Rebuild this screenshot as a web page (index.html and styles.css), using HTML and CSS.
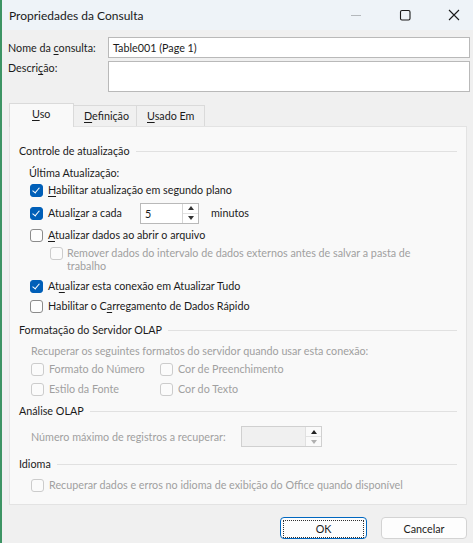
FILE: index.html
```html
<html>
  <head>
    <meta charset="utf-8" />
    <link rel="stylesheet" href="styles.css">
    <title>Propriedades da Consulta</title>
  </head>
  <body>
    <div class="window">
      <div class="titlebar">
        <span class="title">Propriedades da Consulta</span>
        <div class="controls">
          <svg class="ctl" width="12" height="12" viewBox="0 0 12 12"><path d="M1 6.5h10" stroke="#b4b8bc" stroke-width="1"/></svg>
          <svg class="ctl" width="12" height="12" viewBox="0 0 12 12"><rect x="1.5" y="1.5" width="9.5" height="9.5" rx="1.5" fill="none" stroke="#1a1a1a" stroke-width="1.1"/></svg>
          <svg class="ctl" width="12" height="12" viewBox="0 0 12 12"><path d="M1 1L11 11M11 1L1 11" stroke="#1a1a1a" stroke-width="1.1"/></svg>
        </div>
      </div>

      <div class="content">
        <div class="field">
          <label class="field-label">Nome da <u>c</u>onsulta:</label>
          <div class="input">Table001 (Page 1)</div>
        </div>
        <div class="field">
          <label class="field-label desc-label">Descri<u>ç</u>ão:</label>
          <div class="input textarea"></div>
        </div>

        <div class="tabs">
          <div class="tab active"><u>U</u>so</div>
          <div class="tab"><u>D</u>efinição</div>
          <div class="tab"><u>U</u>sado Em</div>
        </div>

        <div class="panel">
          <div class="group-title">Controle de atualização</div>
          <div class="indent sub-title">Última Atualização:</div>

          <div class="check-row r1">
            <span class="box checked"></span>
            <span><u>H</u>abilitar atualização em segundo plano</span>
          </div>
          <div class="check-row r2">
            <span class="box checked"></span>
            <span class="every">Atuali<u>z</u>ar a cada</span>
            <div class="spin">
              <span class="spin-value">5</span>
              <div class="spin-btns">
                <span class="arrow up"></span>
                <span class="arrow down"></span>
              </div>
            </div>
            <span class="units">minutos</span>
          </div>
          <div class="check-row r3">
            <span class="box"></span>
            <span><u>A</u>tualizar dados ao abrir o arquivo</span>
          </div>
          <div class="check-row nested disabled">
            <span class="box"></span>
            <span class="wrap">Remover dados do intervalo de dados externos antes de salvar a pasta de<br>trabalho</span>
          </div>
          <div class="check-row r5">
            <span class="box checked"></span>
            <span>At<u>u</u>alizar esta conexão em Atualizar Tudo</span>
          </div>
          <div class="check-row r6">
            <span class="box"></span>
            <span>Habilitar o C<u>a</u>rregamento de Dados Rápido</span>
          </div>

          <div class="group-title g2">Formatação do Servidor OLAP</div>
          <div class="dim intro">Recuperar os seguintes formatos do servidor quando usar esta conexão:</div>
          <div class="olap-grid disabled">
            <div class="check-row"><span class="box"></span><span>Formato do Número</span></div>
            <div class="check-row"><span class="box"></span><span>Cor de Preenchimento</span></div>
            <div class="check-row"><span class="box"></span><span>Estilo da Fonte</span></div>
            <div class="check-row"><span class="box"></span><span>Cor do Texto</span></div>
          </div>

          <div class="group-title g3">Análise OLAP</div>
          <div class="max-row">
            <span class="dim">Número máximo de registros a recuperar:</span>
            <div class="spin wide off">
              <span class="spin-value"></span>
              <div class="spin-btns">
                <span class="arrow up"></span>
                <span class="arrow down"></span>
              </div>
            </div>
          </div>

          <div class="group-title g4">Idioma</div>
          <div class="check-row lang disabled">
            <span class="box"></span>
            <span>Recuperar dados e erros no idioma de exibição do Office quando disponível</span>
          </div>
        </div>

        <div class="buttons">
          <button class="btn default"><span>OK</span></button>
          <button class="btn">Cancelar</button>
        </div>
      </div>
    </div>
  </body>
</html>
```

FILE: styles.css
```css
body {
  margin: 0;
  width: 473px;
  height: 543px;
  overflow: hidden;
  font-family: Lato, "Noto Sans", sans-serif;
  font-size: 10.75px;
  color: #1b1b1b;
  background-color: #f0f0f0;
  white-space: nowrap;
}
u {
  text-decoration: underline;
  text-underline-offset: 2px;
}
.window {
  height: 543px;
  border-left: 2px solid #3d9464;
  box-sizing: border-box;
  background-color: #f0f0f0;
}
.titlebar {
  height: 30px;
  display: flex;
  align-items: center;
  background-color: #eef3f8;
  padding-left: 7px;
}
.title {
  flex: 1;
  font-size: 12px;
  color: #1a1a1a;
}
.controls {
  display: flex;
  align-items: center;
  gap: 25px;
  padding-right: 13px;
}
.ctl {
  display: block;
  width: 12px;
  height: 12px;
  margin-left: 12px;
}
.content {
  padding: 7px 3px 0 6px;
}
.field {
  display: flex;
  margin-bottom: 3px;
}
.field-label {
  width: 100px;
  line-height: 21px;
}
.desc-label {
  line-height: 14px;
}
.input {
  flex: 1;
  height: 21px;
  border: 1px solid #b9b9b9;
  background: #ffffff;
  box-sizing: border-box;
  padding-left: 4px;
  line-height: 19px;
}
.textarea {
  height: 31px;
}
.tabs {
  display: flex;
  align-items: flex-end;
  margin-top: 10px;
  padding-left: 1px;
  height: 24px;
}
.tab {
  height: 21px;
  line-height: 20px;
  padding: 0 10px;
  border: 1px solid #dadada;
  border-bottom: none;
  border-left: none;
  background-color: #f0f0f0;
  box-sizing: border-box;
}
.tab:nth-child(2) {
  width: 63px;
}
.tab:nth-child(3) {
  width: 68px;
}
.tab.active {
  height: 24px;
  width: 65px;
  padding-left: 22px;
  border-left: 1px solid #dadada;
  background-color: #f9f9f9;
  margin-bottom: -1px;
  position: relative;
  z-index: 1;
}
.panel {
  width: 458px;
  height: 379px;
  box-sizing: border-box;
  margin-left: 1px;
  border: 1px solid #e3e3e3;
  background-color: #f9f9f9;
  padding: 16px 9px 0 9px;
}
.group-title {
  display: flex;
  align-items: center;
  gap: 6px;
  line-height: 16px;
}
.group-title::after {
  content: "";
  flex: 1;
  height: 1px;
  background-color: #e1e1e1;
}
.indent {
  padding-left: 10px;
}
.sub-title {
  margin-top: 6px;
  line-height: 16px;
}
.check-row {
  display: flex;
  align-items: center;
  line-height: 16px;
  padding-left: 11px;
}
.box {
  flex: none;
  width: 13px;
  height: 13px;
  box-sizing: border-box;
  border: 1px solid #8b8b8b;
  border-radius: 3px;
  background-color: #fdfdfd;
  margin-right: 5px;
}
.box.checked {
  border-color: #005fb8;
  background-color: #005fb8;
  position: relative;
}
.box.checked::after {
  content: "";
  position: absolute;
  left: 3px;
  top: 1px;
  width: 3px;
  height: 6px;
  border-right: 1.3px solid #ffffff;
  border-bottom: 1.3px solid #ffffff;
  transform: rotate(40deg);
}
.r1 {
  margin-top: 1px;
}
.r2 {
  margin-top: 4px;
  height: 22px;
}
.every {
  width: 92px;
}
.spin {
  display: flex;
  width: 59px;
  height: 21px;
  box-sizing: border-box;
  border: 1px solid #b9b9b9;
  background: #ffffff;
}
.spin-value {
  flex: 1;
  padding-left: 4px;
  line-height: 19px;
}
.spin-btns {
  width: 15px;
  display: flex;
  flex-direction: column;
  border-left: 1px solid #d6d6d6;
}
.arrow {
  flex: 1;
  display: flex;
  align-items: center;
  justify-content: center;
}
.arrow.up {
  border-bottom: 1px solid #e2e2e2;
}
.arrow::before {
  content: "";
  border-left: 3.5px solid transparent;
  border-right: 3.5px solid transparent;
}
.arrow.up::before {
  border-bottom: 4px solid #333333;
}
.arrow.down::before {
  border-top: 4px solid #333333;
}
.units {
  margin-left: 12px;
}
.r3 {
  margin-top: 3px;
}
.nested {
  align-items: flex-start;
  padding-left: 31px;
  margin-top: 3px;
  line-height: 13px;
}
.nested .box {
  margin-top: 1px;
  margin-right: 4px;
}
.disabled {
  color: #a0a0a0;
}
.disabled .box {
  border-color: #cccccc;
  background-color: #fbfbfb;
}
.r5 {
  margin-top: 6px;
}
.r6 {
  margin-top: 4px;
}
.g2 {
  margin-top: 8px;
}
.dim {
  color: #a0a0a0;
}
.intro {
  margin-top: 5px;
  padding-left: 12px;
  line-height: 16px;
}
.olap-grid {
  display: grid;
  grid-template-columns: 141px auto;
  row-gap: 4px;
  margin-top: 2px;
}
.olap-grid .check-row {
  padding-left: 12px;
}
.olap-grid .check-row:nth-child(even) {
  padding-left: 0;
}
.g3 {
  margin-top: 6px;
}
.max-row {
  display: flex;
  align-items: center;
  padding-left: 12px;
  margin-top: 7px;
}
.max-row .dim {
  width: 210px;
}
.spin.wide {
  width: 81px;
}
.spin.off {
  background-color: #f0f0f0;
  border-color: #d0d0d0;
}
.spin.off .spin-btns {
  background-color: #fafafa;
  border-left-color: #e0e0e0;
}
.spin.off .arrow.up::before {
  border-bottom-color: #222222;
}
.spin.off .arrow.down::before {
  border-top-color: #b0b0b0;
}
.g4 {
  margin-top: 9px;
}
.lang {
  margin-top: 5px;
  padding-left: 12px;
}
.buttons {
  display: flex;
  justify-content: flex-end;
  gap: 14px;
  padding-right: 3px;
  margin-top: 12px;
}
.btn {
  width: 86px;
  height: 22px;
  font-family: inherit;
  font-size: 10.75px;
  color: #1b1b1b;
  background-color: #fdfdfd;
  border: 1px solid #d3d3d3;
  border-radius: 4px;
  padding: 0;
}
.btn.default {
  width: 87px;
  border: 1px solid #0067c0;
  padding: 2px;
}
.btn.default span {
  display: block;
  height: 16px;
  line-height: 15px;
  border: 1px dotted #303030;
}
```
